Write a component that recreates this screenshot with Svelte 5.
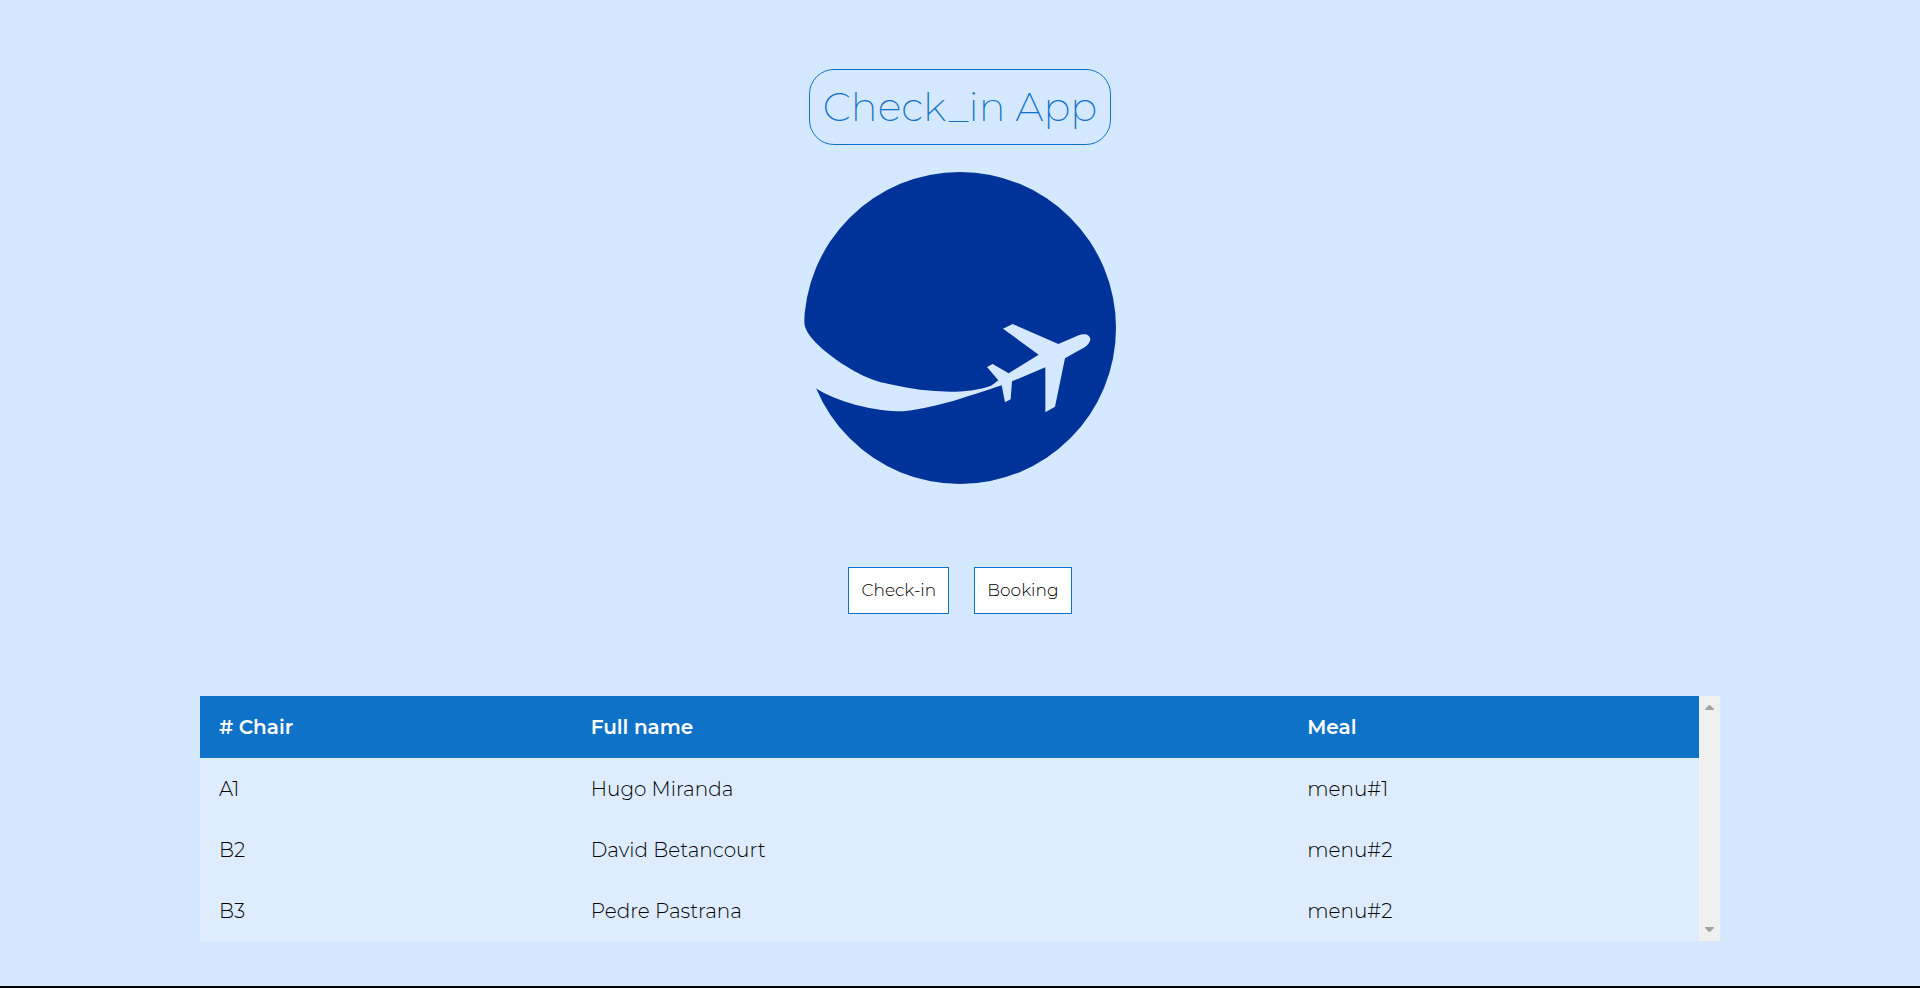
<script>
  const passengers = [
    { chair: 'A1', name: 'Hugo Miranda', meal: 'menu#1' },
    { chair: 'B2', name: 'David Betancourt', meal: 'menu#2' },
    { chair: 'B3', name: 'Pedre Pastrana', meal: 'menu#2' }
  ];
</script>

<main>
  <h1>Check_in App</h1>

  <svg class="logo" viewBox="42 36 936 936" role="img" aria-label="Airplane logo">
    <circle class="globe" cx="510" cy="504" r="468" />
    <path
      class="cut"
      d="M30 480 L42 480 C42 498 48 511 60 528 C98 577 180 632 245 658 C268 667 282 669 300 673 C360 687 420 695 480 695 C520 695 570 690 603 677 Q613 671 625 661 L591 621 L608 612 L656 640 L746 584 L639 506 L668 492 L805 552 L866 526 C885 519 901 525 901 539 Q899 550 885 561 L825 595 L795 740 L766 757 L766 622 L666 664 L662 718 L645 727 L635 676 C570 697 500 722 440 736 Q375 751 340 754 C250 754 140 726 76 684 L30 650 Z"
    />
  </svg>

  <nav>
    <button type="button">Check-in</button>
    <button type="button">Booking</button>
  </nav>

  <section class="list">
    <table>
      <thead>
        <tr><th class="chair"># Chair</th><th class="name">Full name</th><th>Meal</th></tr>
      </thead>
      <tbody>
        {#each passengers as p}
          <tr><td>{p.chair}</td><td>{p.name}</td><td>{p.meal}</td></tr>
        {/each}
      </tbody>
    </table>
    <div class="scrollbar" aria-hidden="true">
      <svg viewBox="0 0 9 5"><path d="M0 5V4L4 0H5L9 4V5Z" /></svg>
      <svg viewBox="0 0 9 5"><path d="M0 0V1L4 5H5L9 1V0Z" /></svg>
    </div>
  </section>
</main>

<style>
  :global(body) {
    margin: 0;
    background: #d4e8ff;
  }

  main {
    box-sizing: border-box;
    min-height: 100vh;
    padding: 69px 24px 42px;
    border-bottom: 2px solid #000;
    display: flex;
    flex-direction: column;
    align-items: center;
    font-family: Montserrat, Inter, sans-serif;
    color: #000;
  }

  h1 {
    margin: 0;
    padding: 12px 13px;
    border: 1px solid #0f72c9;
    border-radius: 25px;
    color: #0f72c9;
    font-size: 40px;
    line-height: 50px;
    font-weight: 200;
  }

  .logo {
    display: block;
    width: 312px;
    height: 312px;
    margin-top: 27px;
  }

  .globe {
    fill: #003399;
  }

  .cut {
    fill: #d4e8ff;
  }

  nav {
    display: flex;
    gap: 25px;
    margin: 83px 0 82px;
  }

  button {
    padding: 13px 12px;
    border: 1px solid #0f72c9;
    background: #fff;
    color: #000;
    font-family: inherit;
    font-size: 17px;
    line-height: 19px;
    font-weight: 300;
    cursor: pointer;
  }

  .list {
    display: flex;
    width: 100%;
    max-width: 1520px;
  }

  table {
    width: 100%;
    border-collapse: collapse;
    table-layout: fixed;
    background: #ddedff;
    font-size: 20px;
    line-height: 24px;
    font-weight: 300;
  }

  th,
  td {
    box-sizing: border-box;
    padding: 19px;
    text-align: left;
  }

  td {
    padding-bottom: 18px;
  }

  th {
    background: #0f72c9;
    color: #fff;
    font-weight: 600;
  }

  .chair {
    width: 24.8%;
  }

  .name {
    width: 47.8%;
  }

  .scrollbar {
    box-sizing: border-box;
    flex: 0 0 21px;
    padding: 9px 6px;
    display: flex;
    flex-direction: column;
    justify-content: space-between;
    background: #f0f0f0;
  }

  .scrollbar svg {
    display: block;
    width: 9px;
    height: 5px;
    fill: #a3a3a3;
  }
</style>
